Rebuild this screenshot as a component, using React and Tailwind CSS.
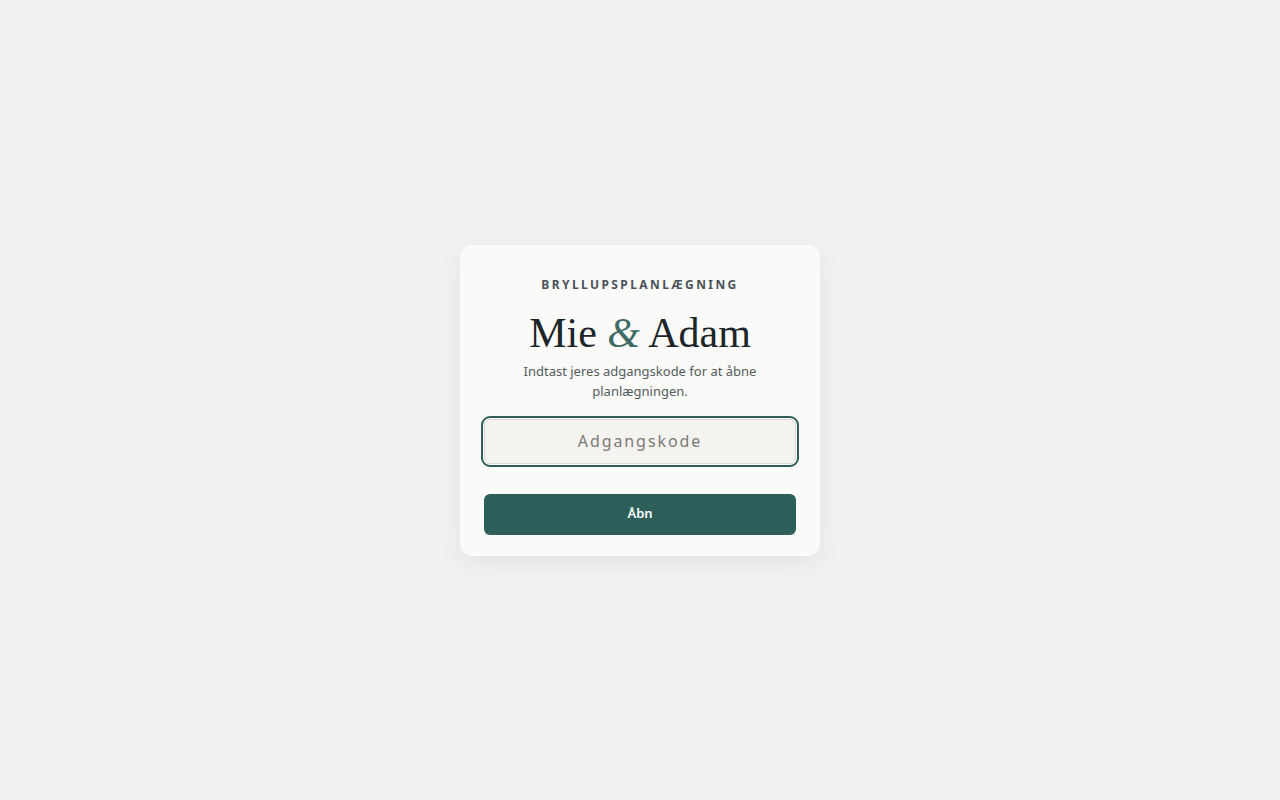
import React, { useState } from 'react';

const App = () => {
  const [code, setCode] = useState('');

  return (
    <div
      className="min-h-screen w-full bg-[#f1f1ef] flex items-center justify-center"
      style={{ fontFamily: '"Noto Sans", "Liberation Sans", sans-serif' }}
    >
      <div className="w-[360px] bg-[#fafaf8] rounded-xl shadow-[0_6px_24px_rgba(0,0,0,0.06)] px-6 pt-[30px] pb-[21px] text-center">
        <p className="text-[12px] leading-5 font-bold tracking-[0.2em] text-[#4b5358] uppercase">
          Bryllupsplanlægning
        </p>
        <h1
          className="mt-[14px] text-[42px] leading-[49px] text-[#1c2528]"
          style={{ fontFamily: '"Liberation Serif", "DejaVu Serif", serif' }}
        >
          Mie <em className="italic text-[#3d6b66]">&amp;</em> Adam
        </h1>
        <p className="mt-[3px] text-[13px] leading-5 text-[#555c60]">
          Indtast jeres adgangskode for at åbne
          <br />
          planlægningen.
        </p>
        <input
          type="password"
          value={code}
          onChange={(e) => setCode(e.target.value)}
          placeholder="Adgangskode"
          className="mt-[18px] block w-full h-[45px] rounded-md bg-[#f4f3ef] border border-[#d8d8d4] text-center text-[16px] tracking-[0.12em] text-[#333] placeholder:text-[#7a7a76] outline-2 outline-offset-1 outline-[#2e5e5a] outline-solid"
        />
        <button className="mt-[30px] w-full h-[41px] rounded-md bg-[#2e5e5a] text-white text-[13px] font-semibold">
          Åbn
        </button>
      </div>
    </div>
  );
};

export default App;
